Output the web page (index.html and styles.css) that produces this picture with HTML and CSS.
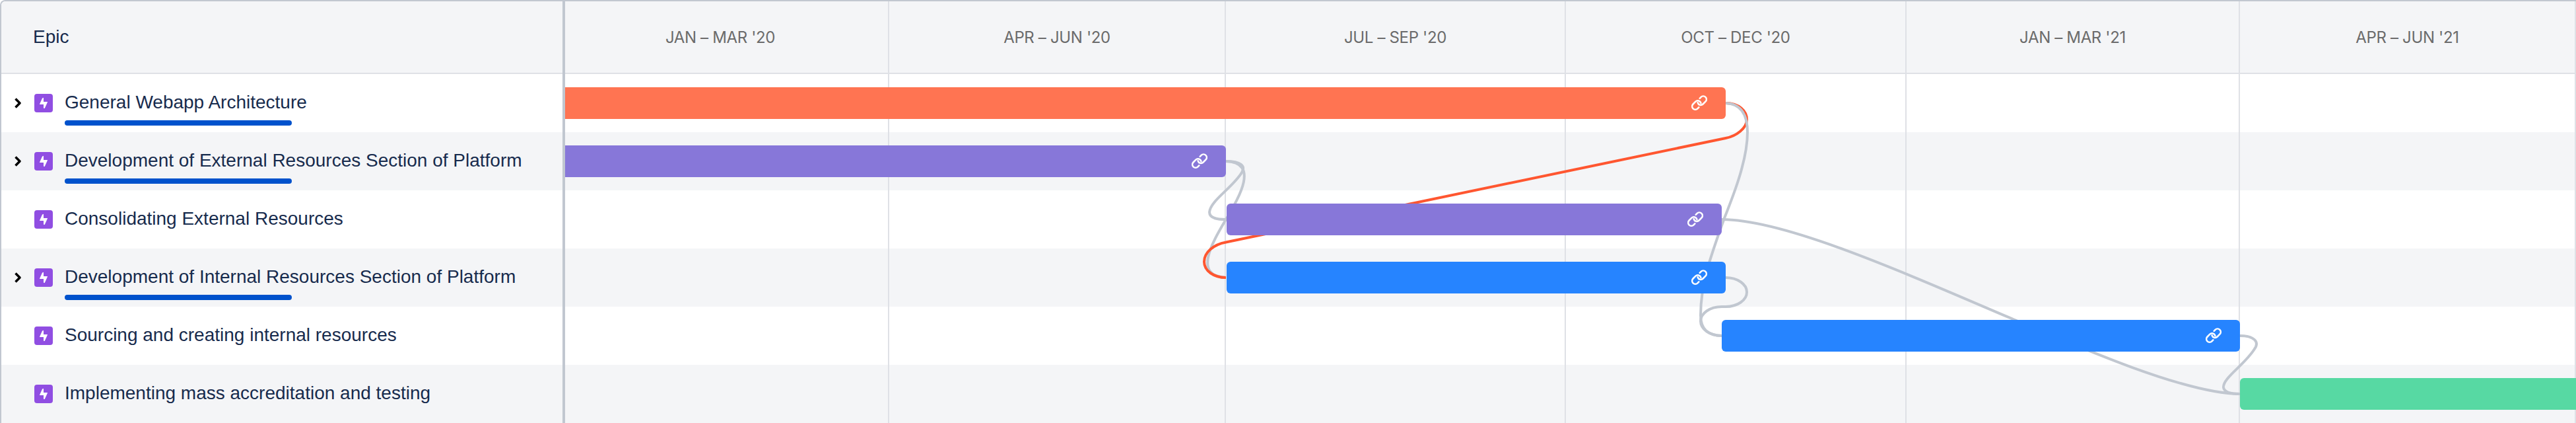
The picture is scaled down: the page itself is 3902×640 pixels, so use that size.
FILE: index.html
```html
<!DOCTYPE html>
<html lang="en">
<head>
<meta charset="utf-8">
<title>Roadmap</title>
<link rel="stylesheet" href="styles.css">
</head>
<body>
<svg class="defs" aria-hidden="true">
  <symbol id="epic" viewBox="0 0 28 28"><rect width="28" height="28" rx="4" fill="#904ee2"/><path d="M13.200 6.200q.3-.6.800-.2V12h5.400q.8 0 .5.800l-4 8.600q-.3.600-1 .600-.9 0-.9-.8V16H8.600q-.8 0-.5-.800l4-8.600q.3-.6 1.100-.4z" fill="#fff"/></symbol>
  <symbol id="chevron" viewBox="0 0 12 18"><path d="M2.500 2.500 9 9l-6.500 6.500" fill="none" stroke="#000" stroke-width="3.600" stroke-linejoin="round"/></symbol>
  <symbol id="link" viewBox="0 0 24 24"><g fill="none" stroke="#fff" stroke-width="2.600" stroke-linecap="round" stroke-linejoin="round"><path d="M12.700 4.800 14.600 2.900a4.800 4.800 0 0 1 6.800 6.800L17.600 13.500A4.800 4.800 0 0 1 9.600 11.300"/><path d="M11.300 18.400 9.400 20.300a4.800 4.800 0 0 1-6.800-6.800L6.400 9.700A4.800 4.800 0 0 1 14.400 11.900"/></g></symbol>
</svg>
<main class="roadmap">
  <section class="epics">
    <header class="epics-head">Epic</header>
    <div class="row"><svg class="chevron"><use href="#chevron"/></svg><svg class="epic"><use href="#epic"/></svg><div class="name"><span>General Webapp Architecture</span><i class="progress"></i></div></div>
    <div class="row"><svg class="chevron"><use href="#chevron"/></svg><svg class="epic"><use href="#epic"/></svg><div class="name"><span>Development of External Resources Section of Platform</span><i class="progress"></i></div></div>
    <div class="row"><span class="chevron"></span><svg class="epic"><use href="#epic"/></svg><div class="name"><span>Consolidating External Resources</span></div></div>
    <div class="row"><svg class="chevron"><use href="#chevron"/></svg><svg class="epic"><use href="#epic"/></svg><div class="name"><span>Development of Internal Resources Section of Platform</span><i class="progress"></i></div></div>
    <div class="row"><span class="chevron"></span><svg class="epic"><use href="#epic"/></svg><div class="name"><span>Sourcing and creating internal resources</span></div></div>
    <div class="row"><span class="chevron"></span><svg class="epic"><use href="#epic"/></svg><div class="name"><span>Implementing mass accreditation and testing</span></div></div>
  </section>
  <section class="timeline">
    <header class="quarters">
      <div>JAN – MAR '20</div><div>APR – JUN '20</div><div>JUL – SEP '20</div><div>OCT – DEC '20</div><div>JAN – MAR '21</div><div>APR – JUN '21</div>
    </header>
    <div class="chart">
      <div class="grid-lines"><i></i><i></i><i></i><i></i><i></i><i></i></div>
      <svg class="links" viewBox="856 112 3046 528">
        <g fill="none" stroke="#c1c7d0" stroke-width="4">
          <path d="M1857 244C1880 244 1887 251 1881 261C1867 284 1833 304 1832 321C1832 331 1846 332 1857 332"/>
          <path d="M1857 244C1910 246 1874 303 1857 332S1804 418 1857 420"/>
          <path d="M2608 332C2782 332 3231 596 3393 596"/>
          <path d="M2614 420C2632 420 2646 430 2646 442S2632 464 2614 464H2608C2590 464 2576 474 2576 486S2590 508 2608 508"/>
          <path d="M3393 508C3414 508 3423 517 3415 528C3400 552 3367 572 3368 586C3369 594 3382 596 3393 596"/>
        </g>
        <path d="M2614 156C2634 156 2646 168 2646 181S2630 206 2614 209L1857 366.500C1838 370 1824 382 1824 396S1839 420 1857 420" fill="none" stroke="#ff5630" stroke-width="4"/>
        <path d="M2614 156C2640 157 2647 178 2647 200C2647 240 2628 290 2612 330C2591 388 2576 430 2576 477C2576 498 2588 508 2608 508" fill="none" stroke="#c1c7d0" stroke-width="4"/>
      </svg>
      <div class="lane"><div class="bar coral from-start" style="width:1758px"><svg><use href="#link"/></svg></div></div>
      <div class="lane"><div class="bar purple from-start" style="width:1001px"><svg><use href="#link"/></svg></div></div>
      <div class="lane"><div class="bar purple" style="margin-left:1002px;width:750px"><svg><use href="#link"/></svg></div></div>
      <div class="lane"><div class="bar blue" style="margin-left:1002px;width:756px"><svg><use href="#link"/></svg></div></div>
      <div class="lane"><div class="bar blue" style="margin-left:1752px;width:785px"><svg><use href="#link"/></svg></div></div>
      <div class="lane"><div class="bar green" style="margin-left:2537px;width:509px"></div></div>
    </div>
  </section>
</main>
</body>
</html>
```
FILE: styles.css
```css
* { box-sizing: border-box; }
body { margin: 0; background: #fff; font-family: "Liberation Sans", Arial, sans-serif; color: #172b4d; }
.defs { display: none; }
.roadmap { display: flex; width: 3902px; height: 640px; overflow: hidden; border: solid #c1c7d0; border-width: 2px 0 0 2px; border-radius: 8px 0 0 0; }
.epics { flex: 0 0 854px; border-right: 4px solid #c1c7d0; }
.epics-head { display: flex; align-items: center; height: 110px; padding-left: 48px; border-bottom: 2px solid #dfe1e6; background: #f4f5f7; font-size: 28px; }
.row { display: flex; align-items: center; height: 88px; padding-left: 19px; font-size: 28px; }
.row:nth-child(odd) { background: #f4f5f7; }
.chevron { width: 12px; height: 18px; margin-right: 19px; }
.epic { width: 28px; height: 28px; margin-right: 18px; }
.name { position: relative; height: 88px; line-height: 86px; white-space: nowrap; }
.progress { position: absolute; left: 0; top: 70px; width: 344px; height: 8px; border-radius: 4px; background: #0052cc; }
.timeline { flex: 1; min-width: 0; }
.quarters, .grid-lines { display: grid; grid-template-columns: 491px 510px 515px 516px 505px 1fr; }
.quarters { height: 110px; border-bottom: 2px solid #dfe1e6; background: #f4f5f7; font: 24px/110px Inter, sans-serif; letter-spacing: -0.35px; color: #6b6b6b; text-align: center; }
.quarters div { height: 108px; }
.quarters div:first-child { padding-right: 19px; }
.quarters div, .grid-lines i { border-right: 2px solid #dfe1e6; }
.chart { position: relative; }
.grid-lines, .links { position: absolute; inset: 0; width: 100%; height: 100%; }
.links { width: 3046px; }
.lane { display: flex; align-items: center; height: 88px; }
.lane:nth-of-type(odd) { background: #f4f5f7; }
.bar { position: relative; flex: none; display: flex; align-items: center; justify-content: flex-end; height: 48px; padding-right: 28px; border-radius: 6px; }
.bar svg { width: 24px; height: 24px; margin-bottom: 1px; }
.from-start { border-radius: 0 6px 6px 0; }
.coral { background: #ff7452; }
.purple { background: #8777d9; }
.blue { background: #2684ff; }
.green { background: #57d9a3; border-radius: 6px 0 0 6px; }
```
